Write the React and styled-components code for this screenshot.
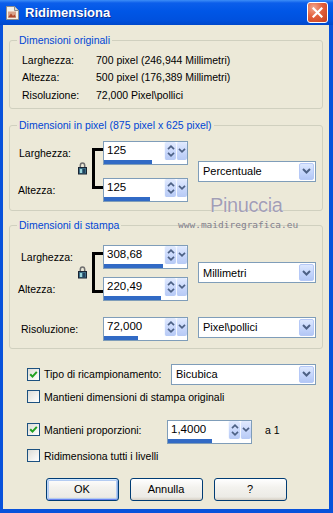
import React from "react";
import styled, { createGlobalStyle } from "styled-components";

const GlobalStyle = createGlobalStyle`
  * { box-sizing: border-box; }
  html, body { margin: 0; padding: 0; }
  body {
    background: #ffffff;
    font-family: "Liberation Sans", Arial, sans-serif;
    color: #000;
  }
`;

const Window = styled.div`
  position: relative;
  width: 333px;
  height: 513px;
  display: flex;
  flex-direction: column;
  background: #0852DB;
  overflow: hidden;
`;

const TitleBar = styled.div`
  flex: none;
  height: 25px;
  display: flex;
  align-items: center;
  padding: 0 5px 0 5px;
  background: linear-gradient(180deg, #3D8DF7 0%, #0C5EEA 12%, #0056E6 45%, #0051DE 80%, #0048CB 100%);
`;

const TitleText = styled.span`
  flex: 1;
  margin-left: 5px;
  font-family: "Liberation Sans", Arial, sans-serif;
  font-weight: bold;
  font-size: 13px;
  color: #fff;
  text-shadow: 1px 1px 0 #0B2F93;
`;

const CloseButton = styled.div`
  width: 21px;
  height: 21px;
  border: 1px solid #fff;
  border-radius: 3px;
  background: radial-gradient(circle at 30% 25%, #F2A78F 0%, #E3603C 45%, #C5401E 100%);
  display: flex;
  align-items: center;
  justify-content: center;
`;

const Body = styled.div`
  flex: 1;
  margin: 0 4px 4px 3px;
  background: #ECE9D8;
  padding: 9px 6px 0;
  display: flex;
  flex-direction: column;
`;

const Group = styled.fieldset`
  margin: ${(p) => p.$mt}px 0 0;
  padding: 0;
  border: 1px solid #D0D0BF;
  border-radius: 3px;
  min-width: 0;
`;

const Legend = styled.legend`
  margin-left: 7px;
  padding: 0 2px;
  font-size: 10.5px;
  line-height: 13px;
  color: #0046D5;
`;

const InfoGrid = styled.div`
  display: grid;
  grid-template-columns: 74px auto;
  grid-auto-rows: 17.5px;
  align-items: center;
  padding: 4px 0 4px 12px;
  font-size: 10.5px;
`;

const LinkedGrid = styled.div`
  display: grid;
  grid-template-columns: 68px 25px 85px 10px 118px;
  grid-template-rows: 24px 24px;
  row-gap: ${(p) => p.$gap}px;
  padding: ${(p) => p.$pt}px 0 ${(p) => p.$pb}px;
`;

const ResRow = styled.div`
  display: grid;
  grid-template-columns: 93px 85px 10px 118px;
  grid-template-rows: 24px;
  margin-top: ${(p) => p.$mt}px;
  padding-bottom: ${(p) => p.$pb}px;
`;

const FieldLabel = styled.span`
  grid-column: 1;
  grid-row: ${(p) => p.$row};
  align-self: center;
  padding-left: ${(p) => p.$inset}px;
  font-size: 10.5px;
`;

const LinkArt = styled.svg`
  grid-column: 2;
  grid-row: 1 / span 2;
  align-self: start;
`;

const SpinCell = styled.div`
  grid-column: ${(p) => p.$col};
  grid-row: ${(p) => p.$row};
`;

const SelectCell = styled.div`
  grid-column: ${(p) => p.$col};
  grid-row: ${(p) => p.$row};
  align-self: ${(p) => p.$align};
`;

const SpinBox = styled.div`
  width: 85px;
  height: ${(p) => p.$h}px;
  border: 1px solid #7F9DB9;
  background: #fff;
  display: flex;
  flex-direction: column;
`;

const SpinTop = styled.div`
  display: flex;
  height: 18px;
`;

const SpinText = styled.div`
  flex: 1;
  padding-left: 3px;
  font-size: 11.5px;
  line-height: 17px;
`;

const SpinButton = styled.div`
  width: ${(p) => p.$w}px;
  display: flex;
  flex-direction: column;
  align-items: center;
  justify-content: center;
  gap: 2px;
  background: linear-gradient(180deg, #E1EAFE 0%, #C8D7FB 55%, #B7CAF5 100%);
  border-left: 1px solid #F4F8FF;
  border-radius: 2px;
`;

const Track = styled.div`
  flex: 1;
  display: flex;
  align-items: flex-end;
  background: #fff;
`;

const Fill = styled.div`
  height: 4px;
  background: #316AC5;
`;

const SelectBox = styled.div`
  width: ${(p) => p.$w}px;
  height: 21px;
  border: 1px solid #7F9DB9;
  background: #fff;
  display: flex;
  align-items: center;
  padding: 1px;
`;

const SelectText = styled.span`
  flex: 1;
  padding-left: 3px;
  font-size: 11px;
`;

const SelectButton = styled.div`
  width: 15px;
  height: 17px;
  border: 1px solid #B6C9F7;
  border-radius: 2px;
  background: linear-gradient(180deg, #DDE8FE 0%, #C4D5FB 55%, #B3C7F5 100%);
  display: flex;
  align-items: center;
  justify-content: center;
`;

const Options = styled.div`
  padding-left: 18px;
  display: flex;
  flex-direction: column;
`;

const OptRow = styled.div`
  display: flex;
  align-items: ${(p) => p.$align || "center"};
  height: ${(p) => p.$h}px;
  margin-top: ${(p) => p.$mt}px;
`;

const CheckLabel = styled.label`
  display: flex;
  align-items: center;
  gap: 4px;
  height: ${(p) => p.$h || 16}px;
  width: ${(p) => (p.$w ? `${p.$w}px` : "auto")};
  font-size: 10.5px;
  white-space: nowrap;
`;

const Box = styled.span`
  flex: none;
  width: 13px;
  height: 13px;
  border: 1px solid #1C5180;
  background: linear-gradient(135deg, #DCDCD7 0%, #F2F2EF 60%, #FFFFFF 100%);
  display: flex;
  align-items: center;
  justify-content: center;
`;

const Suffix = styled.span`
  margin-left: 13px;
  font-size: 10.5px;
  line-height: 20px;
`;

const ButtonRow = styled.div`
  display: flex;
  justify-content: center;
  gap: 11px;
  margin-top: 14px;
`;

const Button = styled.button`
  width: 73px;
  height: 23px;
  padding: 0;
  border: 1px solid #003C74;
  border-radius: 3px;
  background: linear-gradient(180deg, #FFFFFF 0%, #F3F2EE 40%, #ECEBE6 85%, #D6D0C5 100%);
  font-family: "Liberation Sans", Arial, sans-serif;
  font-size: 11px;
  color: #000;
  box-shadow: ${(p) =>
    p.$default
      ? "inset 0 1px 0 #CEE7FF, inset 1px 0 0 #BCD4F6, inset -1px 0 0 #89ADE4, inset 0 -1px 0 #6982EE, inset 0 0 0 2px #B4CCF2"
      : "none"};
`;

const Watermark = styled.div`
  position: absolute;
  left: 178px;
  top: 195px;
  display: flex;
  flex-direction: column;
  pointer-events: none;
`;

const WmName = styled.span`
  margin-left: 32px;
  font-family: "Liberation Sans", Arial, sans-serif;
  font-size: 20px;
  line-height: 20px;
  letter-spacing: -0.4px;
  color: #A39EB4;
  text-shadow: 0 0 1px #ffffff;
`;

const WmUrl = styled.span`
  margin-top: 4px;
  font-family: "DejaVu Sans Mono", monospace;
  font-size: 9.5px;
  line-height: 12px;
  color: #83818E;
`;

const Chevron = ({ up }) => (
  <svg width="8" height="5" viewBox="0 0 8 5">
    <polyline
      points={up ? "1,4.2 4,1.2 7,4.2" : "1,0.8 4,3.8 7,0.8"}
      fill="none"
      stroke="#4D6185"
      strokeWidth="1.7"
    />
  </svg>
);

function Spin({ value, fill, h = 24 }) {
  return (
    <SpinBox $h={h}>
      <SpinTop>
        <SpinText>{value}</SpinText>
        <SpinButton $w={12}>
          <Chevron up />
          <Chevron />
        </SpinButton>
        <SpinButton $w={11}>
          <Chevron />
        </SpinButton>
      </SpinTop>
      <Track>
        <Fill style={{ width: `${fill}%` }} />
      </Track>
    </SpinBox>
  );
}

function Select({ value, w }) {
  return (
    <SelectBox $w={w}>
      <SelectText>{value}</SelectText>
      <SelectButton>
        <svg width="9" height="6" viewBox="0 0 9 6">
          <polyline points="1,1 4.5,4.5 8,1" fill="none" stroke="#4D6185" strokeWidth="2" />
        </svg>
      </SelectButton>
    </SelectBox>
  );
}

function Check({ checked }) {
  return (
    <Box>
      {checked && (
        <svg width="9" height="9" viewBox="0 0 9 9">
          <polyline points="1.2,4.2 3.5,6.6 7.8,1.8" fill="none" stroke="#21A121" strokeWidth="2" />
        </svg>
      )}
    </Box>
  );
}

function LinkBracket() {
  return (
    <LinkArt width="25" height="49" viewBox="0 0 25 49">
      <g transform="translate(0,21)">
        <path d="M2.3 6 V3.6 A2.2 2.6 0 0 1 6.7 3.6 V6" fill="none" stroke="#707070" strokeWidth="1.5" />
        <rect x="0.5" y="5.5" width="8" height="6.5" fill="#3C6E86" stroke="#1B2433" />
        <rect x="2" y="7" width="2" height="4" fill="#9BD6DC" />
        <rect x="5" y="7" width="2" height="4" fill="#24435E" />
      </g>
      <path d="M25 8.5 H15.5 V46.5 H25" fill="none" stroke="#000" strokeWidth="3" />
    </LinkArt>
  );
}

function TitleIcon() {
  return (
    <svg width="15" height="16" viewBox="0 0 15 16">
      <path d="M1.5 1.5 H9.5 L13.5 5.5 V14.5 H1.5 Z" fill="#F4F1E8" stroke="#8D8D8D" />
      <path d="M9.5 1.5 V5.5 H13.5" fill="#D9D6CC" stroke="#8D8D8D" />
      <rect x="3" y="6.5" width="8" height="6" fill="#D9A38A" />
      <path d="M3 12.5 L6 8.5 L8 11 L9.5 9.5 L11 12.5 Z" fill="#B0482C" />
    </svg>
  );
}

export default function App() {
  return (
    <>
      <GlobalStyle />
      <Window>
        <TitleBar>
          <TitleIcon />
          <TitleText>Ridimensiona</TitleText>
          <CloseButton>
            <svg width="11" height="11" viewBox="0 0 11 11">
              <path d="M1.5 1.5 L9.5 9.5 M9.5 1.5 L1.5 9.5" stroke="#fff" strokeWidth="2.2" strokeLinecap="square" />
            </svg>
          </CloseButton>
        </TitleBar>
        <Body>
          <Group $mt={0}>
            <Legend>Dimensioni originali</Legend>
            <InfoGrid>
              <span>Larghezza:</span>
              <span>700 pixel (246,944 Millimetri)</span>
              <span>Altezza:</span>
              <span>500 pixel (176,389 Millimetri)</span>
              <span>Risoluzione:</span>
              <span>72,000 Pixel\pollici</span>
            </InfoGrid>
          </Group>

          <Group $mt={10}>
            <Legend>Dimensioni in pixel (875 pixel x 625 pixel)</Legend>
            <LinkedGrid $gap={13} $pt={9} $pb={8}>
              <FieldLabel $row={1} $inset={9}>Larghezza:</FieldLabel>
              <FieldLabel $row={2} $inset={8}>Altezza:</FieldLabel>
              <LinkBracket />
              <SpinCell $col={3} $row={1}>
                <Spin value="125" fill={58} />
              </SpinCell>
              <SpinCell $col={3} $row={2}>
                <Spin value="125" fill={55} />
              </SpinCell>
              <SelectCell $col={5} $row="1 / span 2" $align="center">
                <Select value="Percentuale" w={118} />
              </SelectCell>
            </LinkedGrid>
          </Group>

          <Group $mt={8}>
            <Legend>Dimensioni di stampa</Legend>
            <LinkedGrid $gap={8} $pt={13} $pb={0}>
              <FieldLabel $row={1} $inset={11}>Larghezza:</FieldLabel>
              <FieldLabel $row={2} $inset={8}>Altezza:</FieldLabel>
              <LinkBracket />
              <SpinCell $col={3} $row={1}>
                <Spin value="308,68" fill={71} />
              </SpinCell>
              <SpinCell $col={3} $row={2}>
                <Spin value="220,49" fill={69} />
              </SpinCell>
              <SelectCell $col={5} $row="1 / span 2" $align="center">
                <Select value="Millimetri" w={118} />
              </SelectCell>
            </LinkedGrid>
            <ResRow $mt={16} $pb={7}>
              <FieldLabel $row={1} $inset={11}>Risoluzione:</FieldLabel>
              <SpinCell $col={2} $row={1}>
                <Spin value="72,000" fill={41} />
              </SpinCell>
              <SelectCell $col={4} $row={1} $align="start">
                <Select value="Pixel\pollici" w={118} />
              </SelectCell>
            </ResRow>
          </Group>

          <Options>
            <OptRow $h={21} $mt={15}>
              <CheckLabel $w={144}>
                <Check checked />
                Tipo di ricampionamento:
              </CheckLabel>
              <Select value="Bicubica" w={145} />
            </OptRow>
            <OptRow $h={16} $mt={4}>
              <CheckLabel>
                <Check />
                Mantieni dimensioni di stampa originali
              </CheckLabel>
            </OptRow>
            <OptRow $h={24} $mt={15} $align="flex-start">
              <CheckLabel $w={140} $h={20}>
                <Check checked />
                Mantieni proporzioni:
              </CheckLabel>
              <Spin value="1,4000" fill={53} />
              <Suffix>a 1</Suffix>
            </OptRow>
            <OptRow $h={16} $mt={4}>
              <CheckLabel>
                <Check />
                Ridimensiona tutti i livelli
              </CheckLabel>
            </OptRow>
          </Options>

          <ButtonRow>
            <Button $default>OK</Button>
            <Button>Annulla</Button>
            <Button>?</Button>
          </ButtonRow>
        </Body>
        <Watermark>
          <WmName>Pinuccia</WmName>
          <WmUrl>www.maidiregrafica.eu</WmUrl>
        </Watermark>
      </Window>
    </>
  );
}
